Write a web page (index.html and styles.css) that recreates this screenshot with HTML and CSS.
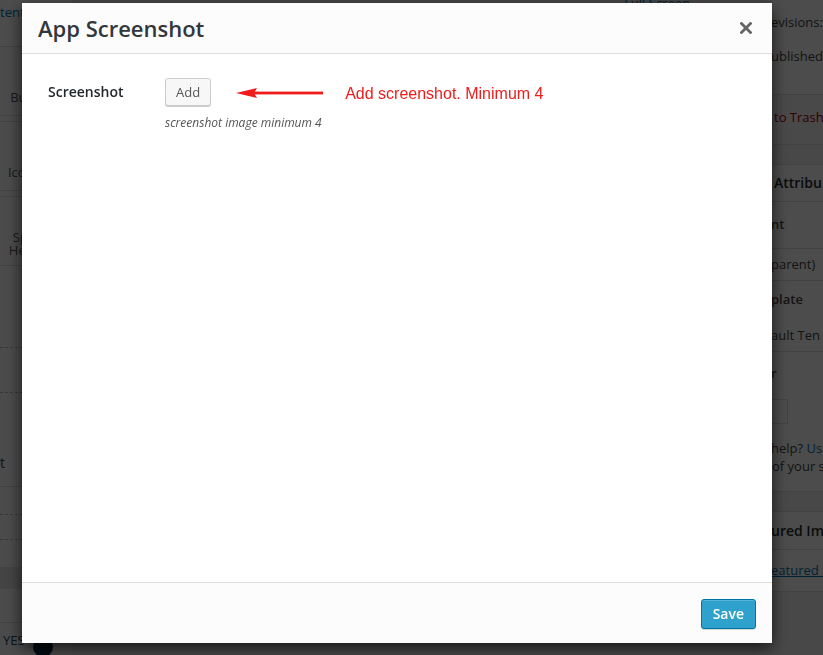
FILE: index.html
```html
<!DOCTYPE html>
<html lang="en">
<head>
<meta charset="utf-8">
<title>App Screenshot</title>
<link rel="stylesheet" href="styles.css">
</head>
<body>
<div class="page">
  <aside class="lc">
    <div class="lc-top">tent</div>
    <div class="tab">
      <span class="tab-ico tab-ico-arrow"></span>
      <span class="tab-label">Buttons</span>
    </div>
    <div class="tab tab-bordered">
      <span class="tab-ico tab-ico-box"></span>
      <span class="tab-label">Icon Box</span>
    </div>
    <div class="tab tab-bordered tab-two">
      <span class="tab-ico tab-ico-arrow"></span>
      <span class="tab-label">Special<br>Heading</span>
    </div>
    <div class="lc-rest">
      <div class="lr lr-a"></div>
      <div class="lr lr-b"></div>
      <div class="lr lr-c">t</div>
      <div class="lr lr-d"></div>
      <div class="lr lr-e"></div>
      <div class="lr lr-f"></div>
      <div class="lr lr-band"></div>
      <div class="lr lr-g"></div>
      <div class="lr lr-yes"><span>YES</span><span class="dot"></span></div>
    </div>
  </aside>
  <main class="mid">
    <div class="toolbar"><span class="fs">Full Screen</span></div>
  </main>
  <aside class="rc">
    <section class="box">
      <div class="r-l1">evisions:</div>
      <div class="r-l2">ublished</div>
      <div class="r-sp"></div>
      <div class="r-major"><span class="trash">to Trash</span></div>
    </section>
    <section class="box box-attr">
      <div class="r-head r-head1">Attribu</div>
      <div class="r-lab">nt</div>
      <div class="r-sel">parent)</div>
      <div class="r-lab2">plate</div>
      <div class="r-sel r-sel2">ault Ten</div>
      <div class="r-lab3">r</div>
      <div class="r-input"></div>
      <p class="r-help">help? <span class="link">Us</span><br>of your s</p>
    </section>
    <section class="box box-feat">
      <div class="r-head r-head2">ured Ima</div>
      <div class="r-link"><span class="ulink">eatured i</span></div>
    </section>
  </aside>
</div>

<div class="overlay"></div>

<div class="modal">
  <header class="m-head">
    <h1 class="m-title">App Screenshot</h1>
    <span class="m-close" aria-label="Close">
      <svg width="12" height="12" viewBox="0 0 12 12"><path d="M1.5 1.5 L10.5 10.5 M10.5 1.5 L1.5 10.5" stroke="#666" stroke-width="2.8" stroke-linecap="square"/></svg>
    </span>
  </header>
  <div class="m-body">
    <div class="field">
      <label class="f-label">Screenshot</label>
      <div class="f-ctrl">
        <div class="f-line">
          <button class="btn">Add</button>
          <svg class="arrow" width="87" height="12" viewBox="0 0 87 12"><polygon points="0,6 21,1 18,6 21,11" fill="#ee1c1c"/><rect x="18" y="4.6" width="69" height="2.8" fill="#ee1c1c"/></svg>
          <span class="note">Add screenshot. Minimum 4</span>
        </div>
        <p class="desc">screenshot image minimum 4</p>
      </div>
    </div>
  </div>
  <footer class="m-foot">
    <button class="btn-primary">Save</button>
  </footer>
</div>
</body>
</html>
```

FILE: styles.css
```css
* { box-sizing: border-box; margin: 0; padding: 0; }
html, body { width: 823px; height: 655px; overflow: hidden; }
body {
  font-family: "Open Sans", sans-serif;
  font-size: 13px;
  color: #444;
  background: #f1f1f1;
}

/* ---------- background page ---------- */
.page {
  display: grid;
  grid-template-columns: 72px 1fr 51px;
  height: 655px;
}

.lc {
  background: #fbfbfb;
  overflow: hidden;
  white-space: nowrap;
}
.lc-top {
  height: 47px;
  line-height: 24px;
  color: #0073aa;
  border-bottom: 1px solid #ddd;
  background: #fff;
}
.tab {
  height: 69px;
  border-bottom: 1px solid #ddd;
  display: flex;
  flex-direction: column;
  align-items: center;
  padding: 16px 4px 0 0;
  color: #555;
}
.tab-bordered {
  margin-top: 5px;
  border-top: 1px solid #ddd;
  height: 70px;
}
.tab-ico { display: block; width: 14px; height: 14px; }
.tab-ico-arrow { width: 6px; height: 6px; margin-top: 4px; margin-bottom: 4px; border-top: 5px solid #666; border-left: 3px solid transparent; border-right: 3px solid transparent; }
.tab-ico-box { background: #777; }
.tab-label { margin-top: 11px; line-height: 18px; text-align: center; }
.tab-two { padding-top: 12px; }
.tab-two .tab-label { margin-top: 8px; line-height: 13px; }

.lc-rest { display: flex; flex-direction: column; }
.lr { border-bottom: 1px dashed #bbb; }
.lr-a { height: 82px; }
.lr-b { height: 45px; }
.lr-c { height: 94px; padding-top: 61px; line-height: 18px; border-bottom: 1px solid #ddd; color: #444; font-size: 14px; }
.lr-d { height: 28px; }
.lr-e { height: 25px; }
.lr-f { height: 27px; border-bottom: none; }
.lr-band { height: 22px; background: #e4e4e4; border-bottom: none; }
.lr-g { height: 34px; border-bottom: 1px solid #ddd; }
.lr-yes { border: none; height: 33px; display: flex; align-items: center; gap: 8px; padding-left: 3px; color: #0e4a6e; }
.dot { width: 20px; height: 20px; border-radius: 50%; background: #07243c; margin-top: 14px; }

.mid { background: #f1f1f1; }
.toolbar { height: 3px; display: flex; justify-content: flex-end; padding-right: 82px; overflow: hidden; }
.fs { line-height: 6px; color: #0073aa; }

.rc {
  overflow: hidden;
  white-space: nowrap;
  background: #f1f1f1;
  text-indent: -1px;
}
.box { background: #fff; border-bottom: 1px solid #ddd; }
.r-l1 { height: 44px; line-height: 44px; }
.r-l2 { height: 24px; line-height: 24px; }
.r-sp { height: 27px; border-bottom: 1px solid #ddd; }
.r-major { height: 49px; background: #f5f5f5; line-height: 44px; padding-left: 3px; }
.trash { color: #a00; }

.box-attr { margin-top: 19px; border-top: 1px solid #ddd; padding-bottom: 16px; }
.r-head { height: 37px; line-height: 36px; font-size: 14px; font-weight: 600; color: #23282d; border-bottom: 1px solid #ddd; }
.r-head1 { padding-left: 3px; }
.r-lab { height: 44px; line-height: 44px; font-weight: 600; }
.r-sel { margin-top: 2px; height: 33px; line-height: 31px; border-top: 1px solid #ddd; border-bottom: 1px solid #ddd; }
.r-lab2 { height: 36px; line-height: 36px; font-weight: 600; }
.r-sel2 { margin-top: 4px; height: 31px; line-height: 29px; border-top: none; }
.r-lab3 { height: 42px; line-height: 42px; font-weight: 600; }
.r-input { margin-top: 5px; width: 16px; height: 25px; border: 1px solid #ddd; border-left: none; }
.r-help { margin-top: 15px; line-height: 18px; }
.link { color: #0073aa; }

.box-feat { margin-top: 19px; border-top: 1px solid #ddd; }
.r-head2 { height: 38px; line-height: 38px; }
.r-link { height: 41px; line-height: 41px; }
.ulink { color: #0073aa; text-decoration: underline; }

/* ---------- overlay + modal ---------- */
.overlay {
  position: fixed;
  inset: 0;
  background: rgba(0, 0, 0, 0.7);
}
.modal {
  position: fixed;
  left: 22px;
  top: 3px;
  width: 750px;
  height: 640px;
  background: #fff;
  display: flex;
  flex-direction: column;
  box-shadow: 0 5px 15px rgba(0, 0, 0, 0.7);
}
.m-head {
  height: 51px;
  flex: none;
  background: #fcfcfc;
  border-bottom: 1px solid #ddd;
  display: flex;
  align-items: center;
  justify-content: space-between;
  padding: 0 20px 0 16px;
}
.m-title {
  font-size: 22px;
  font-weight: 600;
  color: #32373c;
  line-height: 50px;
}
.m-close { display: flex; width: 12px; height: 12px; }

.m-body {
  flex: 1;
  padding: 24px 26px;
}
.field {
  display: grid;
  grid-template-columns: 117px 1fr;
}
.f-label {
  font-size: 14px;
  font-weight: 600;
  color: #23282d;
  line-height: 28px;
}
.f-line { display: flex; align-items: center; }
.btn {
  font-family: "Open Sans", sans-serif;
  font-size: 13px;
  color: #555;
  height: 28px;
  line-height: 26px;
  padding: 0 10px;
  background: #f7f7f7;
  border: 1px solid #ccc;
  border-radius: 3px;
  box-shadow: 0 1px 0 #ccc;
}
.arrow { margin-left: 25px; margin-top: 2px; }
.note {
  margin-left: 22px;
  margin-top: 4px;
  font-family: "Liberation Sans", Arial, sans-serif;
  font-size: 16px;
  color: #ee1c1c;
}
.desc {
  margin-top: 8px;
  font-size: 12px;
  font-style: italic;
  color: #555;
  line-height: 18px;
}

.m-foot {
  height: 61px;
  flex: none;
  background: #fcfcfc;
  border-top: 1px solid #ddd;
  display: flex;
  justify-content: flex-end;
  align-items: flex-start;
  padding: 16px 16px 0;
}
.btn-primary {
  font-family: "Open Sans", sans-serif;
  font-size: 14px;
  font-weight: 600;
  color: #fff;
  height: 30px;
  line-height: 28px;
  padding: 0 11px;
  background: #2ea2cc;
  border: 1px solid #0074a2;
  border-radius: 3px;
  box-shadow: inset 0 1px 0 rgba(120, 200, 230, 0.5), 0 1px 0 rgba(0, 0, 0, 0.15);
}
```
